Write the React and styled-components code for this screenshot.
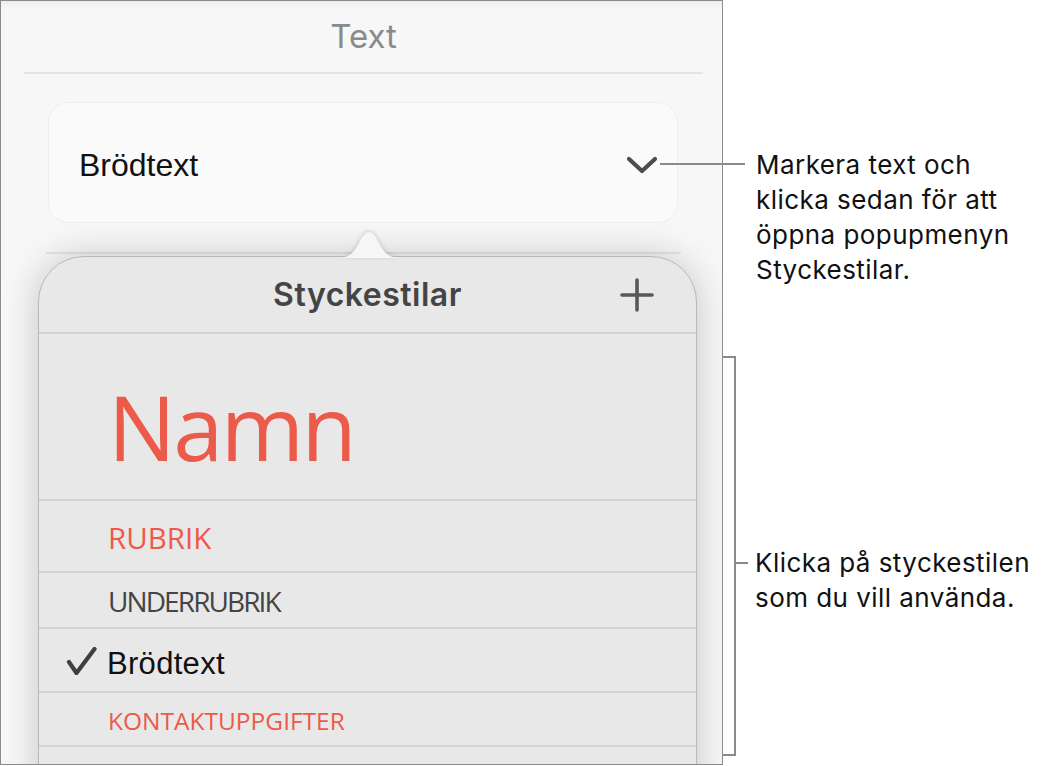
import React from 'react';
import styled, { createGlobalStyle } from 'styled-components';

const GlobalStyle = createGlobalStyle`
  html, body {
    margin: 0;
    padding: 0;
    background: #fff;
  }
  * {
    box-sizing: border-box;
  }
`;

const Page = styled.div`
  display: flex;
  width: 1057px;
  height: 766px;
  overflow: hidden;
  font-family: Inter, "Liberation Sans", sans-serif;
`;

const Panel = styled.div`
  position: relative;
  flex: 0 0 723px;
  height: 765px;
  border: 1px solid #8c8c8c;
  background: #f7f7f7;
  overflow: hidden;
  display: flex;
  flex-direction: column;
  box-shadow: inset 0 10px 12px -10px rgba(0, 0, 0, 0.08);
`;

const TitleBar = styled.div`
  height: 71px;
  display: flex;
  align-items: center;
  justify-content: center;
  font-size: 33px;
  line-height: 1;
  color: #8a8a8a;
  padding-left: 4px;
`;

const Divider = styled.div`
  height: 2px;
  background: #e4e4e4;
  margin: ${p => p.$margin};
`;

const StyleButton = styled.div`
  height: 121px;
  margin: 28px 44px 0 47px;
  border: 1px solid #efefef;
  border-radius: 20px;
  background: #fafafa;
  display: flex;
  align-items: center;
  justify-content: space-between;
  padding: 4px 19px 0 30px;
  font-family: "Liberation Sans", Arial, sans-serif;
  font-size: 32px;
  line-height: 1;
  color: #111;
`;

const Chevron = () => (
  <svg width="32" height="20" viewBox="0 0 32 20">
    <polyline points="3,4 16,16 29,4" fill="none" stroke="#4d4d4d" strokeWidth="4.2" strokeLinecap="round" strokeLinejoin="round" />
  </svg>
);

const Popover = styled.div`
  position: absolute;
  left: 37px;
  top: 255px;
  width: 659px;
  height: 540px;
  border: 1px solid #b9b9b9;
  border-radius: 46px 46px 0 0;
  background: #e8e8e8;
  box-shadow: 0 0 36px rgba(0, 0, 0, 0.2);
`;

const Tail = styled.svg`
  position: absolute;
  left: 298px;
  top: -30px;
  filter: drop-shadow(0 -1px 2px rgba(0, 0, 0, 0.16));
`;

const PopHeader = styled.div`
  position: relative;
  height: 77px;
  border-bottom: 2px solid #d2d2d2;
  display: flex;
  align-items: center;
  justify-content: center;
  font-size: 32px;
  font-weight: 600;
  line-height: 1;
  color: #444;
  letter-spacing: 0.5px;
`;

const AddButton = styled.svg`
  position: absolute;
  right: 42px;
  top: 21px;
`;

const Row = styled.div`
  height: ${p => p.$h}px;
  border-bottom: 2px solid #d2d2d2;
  display: flex;
  align-items: flex-start;
  padding: ${p => p.$pt}px 0 0 ${p => (p.$check ? 27 : 69)}px;
  line-height: 1;
`;

const StyleName = styled.span`
  font-family: "Open Sans", "Noto Sans", sans-serif;
  font-size: ${p => p.$size}px;
  color: ${p => p.$color};
  letter-spacing: ${p => p.$ls || 0}px;
`;

const BodyName = styled.span`
  font-family: "Liberation Sans", Arial, sans-serif;
  font-size: 31px;
  color: #111;
  letter-spacing: 0.3px;
  margin-left: -2px;
`;

const Check = styled.svg`
  margin: -1px 12px 0 0;
`;

const Aside = styled.div`
  flex: 1;
  display: flex;
  flex-direction: column;
  padding-top: 147px;
  color: #111;
`;

const Callout = styled.div`
  display: flex;
  align-items: flex-start;
`;

const Leader = styled.div`
  position: relative;
  z-index: 2;
  flex: 0 0 auto;
  width: ${p => p.$w}px;
  height: 2px;
  margin: ${p => p.$m};
  background: #8a8a8a;
`;

const Note = styled.div`
  font-size: 26px;
  line-height: 35px;
  letter-spacing: 0.45px;
  margin: ${p => p.$m};
  white-space: nowrap;
`;

const Bracket = styled.div`
  flex: 0 0 13px;
  height: 400px;
  margin-top: 69px;
  border: 2px solid #8a8a8a;
  border-left: none;
`;

const rows = [
  { h: 167, pt: 47, size: 90, color: '#ec5a4a', text: 'Namn', ls: -2.5 },
  { h: 72, pt: 22, size: 29.5, color: '#ec5a4a', text: 'RUBRIK' },
  { h: 56, pt: 14, size: 28, color: '#444', text: 'UNDERRUBRIK', ls: -1.9 },
  { h: 64, pt: 19, body: true, text: 'Brödtext' },
  { h: 54, pt: 16, size: 24.5, color: '#ec5a4a', text: 'KONTAKTUPPGIFTER' },
  { h: 60, pt: 16, size: 24, color: '#444', text: '' },
];

export default function App() {
  return (
    <>
      <GlobalStyle />
      <Page>
        <Panel>
          <TitleBar>Text</TitleBar>
          <Divider $margin="0 19px 0 23px" />
          <StyleButton>
            <span>Brödtext</span>
            <Chevron />
          </StyleButton>
          <Divider $margin="29px 41px 0 45px" />

          <Popover>
            <Tail width="64" height="31" viewBox="0 0 64 31">
              <path d="M0 31 C14 31 18 24 24 12 Q32 -2 40 12 C46 24 50 31 64 31 Z" fill="#f6f6f6" />
            </Tail>
            <PopHeader>
              Styckestilar
              <AddButton width="34" height="34" viewBox="0 0 34 34">
                <path d="M17 2 V32 M2 17 H32" stroke="#585858" strokeWidth="3.6" strokeLinecap="round" />
              </AddButton>
            </PopHeader>
            {rows.map((r, i) => (
              <Row key={i} $h={r.h} $pt={r.pt} $check={r.body}>
                {r.body ? (
                  <>
                    <Check width="31" height="28" viewBox="0 0 31 28">
                      <path d="M3 15 L10.5 26 L28.5 2" fill="none" stroke="#3f3f3f" strokeWidth="4.2" strokeLinecap="round" strokeLinejoin="round" />
                    </Check>
                    <BodyName>{r.text}</BodyName>
                  </>
                ) : (
                  <StyleName $size={r.size} $color={r.color} $ls={r.ls}>{r.text}</StyleName>
                )}
              </Row>
            ))}
          </Popover>
        </Panel>

        <Aside>
          <Callout>
            <Leader $w={85} $m="16px 0 0 -63px" />
            <Note $m="0 0 0 11px">
              Markera text och<br />
              klicka sedan för att<br />
              öppna popupmenyn<br />
              Styckestilar.
            </Note>
          </Callout>
          <Callout>
            <Bracket />
            <Leader $w={12} $m="275px 0 0 0" />
            <Note $m="258px 0 0 7px">
              Klicka på styckestilen<br />
              som du vill använda.
            </Note>
          </Callout>
        </Aside>
      </Page>
    </>
  );
}
